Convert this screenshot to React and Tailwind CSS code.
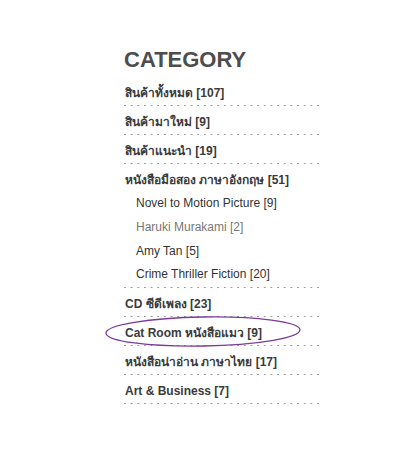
import React from 'react';

const items = [
  { label: 'สินค้าทั้งหมด [107]' },
  { label: 'สินค้ามาใหม่ [9]' },
  { label: 'สินค้าแนะนำ [19]' },
  {
    label: 'หนังสือมือสอง ภาษาอังกฤษ [51]',
    children: [
      { label: 'Novel to Motion Picture [9]' },
      { label: 'Haruki Murakami [2]', visited: true },
      { label: 'Amy Tan [5]' },
      { label: 'Crime Thriller Fiction [20]' },
    ],
  },
  { label: 'CD ซีดีเพลง [23]' },
  { label: 'Cat Room หนังสือแมว [9]' },
  { label: 'หนังสือน่าอ่าน ภาษาไทย [17]' },
  { label: 'Art & Business [7]' },
];

const Dots = () => (
  <div className="h-px w-full bg-[linear-gradient(to_right,#9a9a9a_2px,transparent_2px)] bg-[length:6.67px_1px] bg-repeat-x" />
);

const App = () => {
  return (
    <div className="relative min-h-[458px] w-[402px] bg-white font-['Liberation_Sans',Arial,sans-serif]">
      <div className="ml-[124px] w-[195px] pt-[47px]">
        <h2 className="mb-[4px] text-[22px] font-bold leading-[26px] text-[#4d4d4d]">CATEGORY</h2>
        <ul>
          {items.map((item) => (
            <li key={item.label}>
              <div className="pl-px pt-[7px] pb-[3px] text-[12px] font-bold leading-[18px] text-[#3b3b3b]">
                {item.label}
              </div>
              {item.children && (
                <ul className="pl-[12px]">
                  {item.children.map((c) => (
                    <li
                      key={c.label}
                      className={`py-[3px] text-[12px] leading-[17.75px] ${c.visited ? 'text-[#777777]' : 'text-[#333333]'}`}
                    >
                      {c.label}
                    </li>
                  ))}
                </ul>
              )}
              <Dots />
            </li>
          ))}
        </ul>
      </div>

      {/* hand-drawn highlight around Cat Room */}
      <svg className="absolute left-[100px] top-[314px]" width="206" height="36" viewBox="0 0 206 36">
        <ellipse
          cx="103"
          cy="17.5"
          rx="97"
          ry="14.5"
          fill="none"
          stroke="#7b3b9c"
          strokeWidth="1.3"
          transform="rotate(-1 103 17.5)"
        />
      </svg>
    </div>
  );
};

export default App;
